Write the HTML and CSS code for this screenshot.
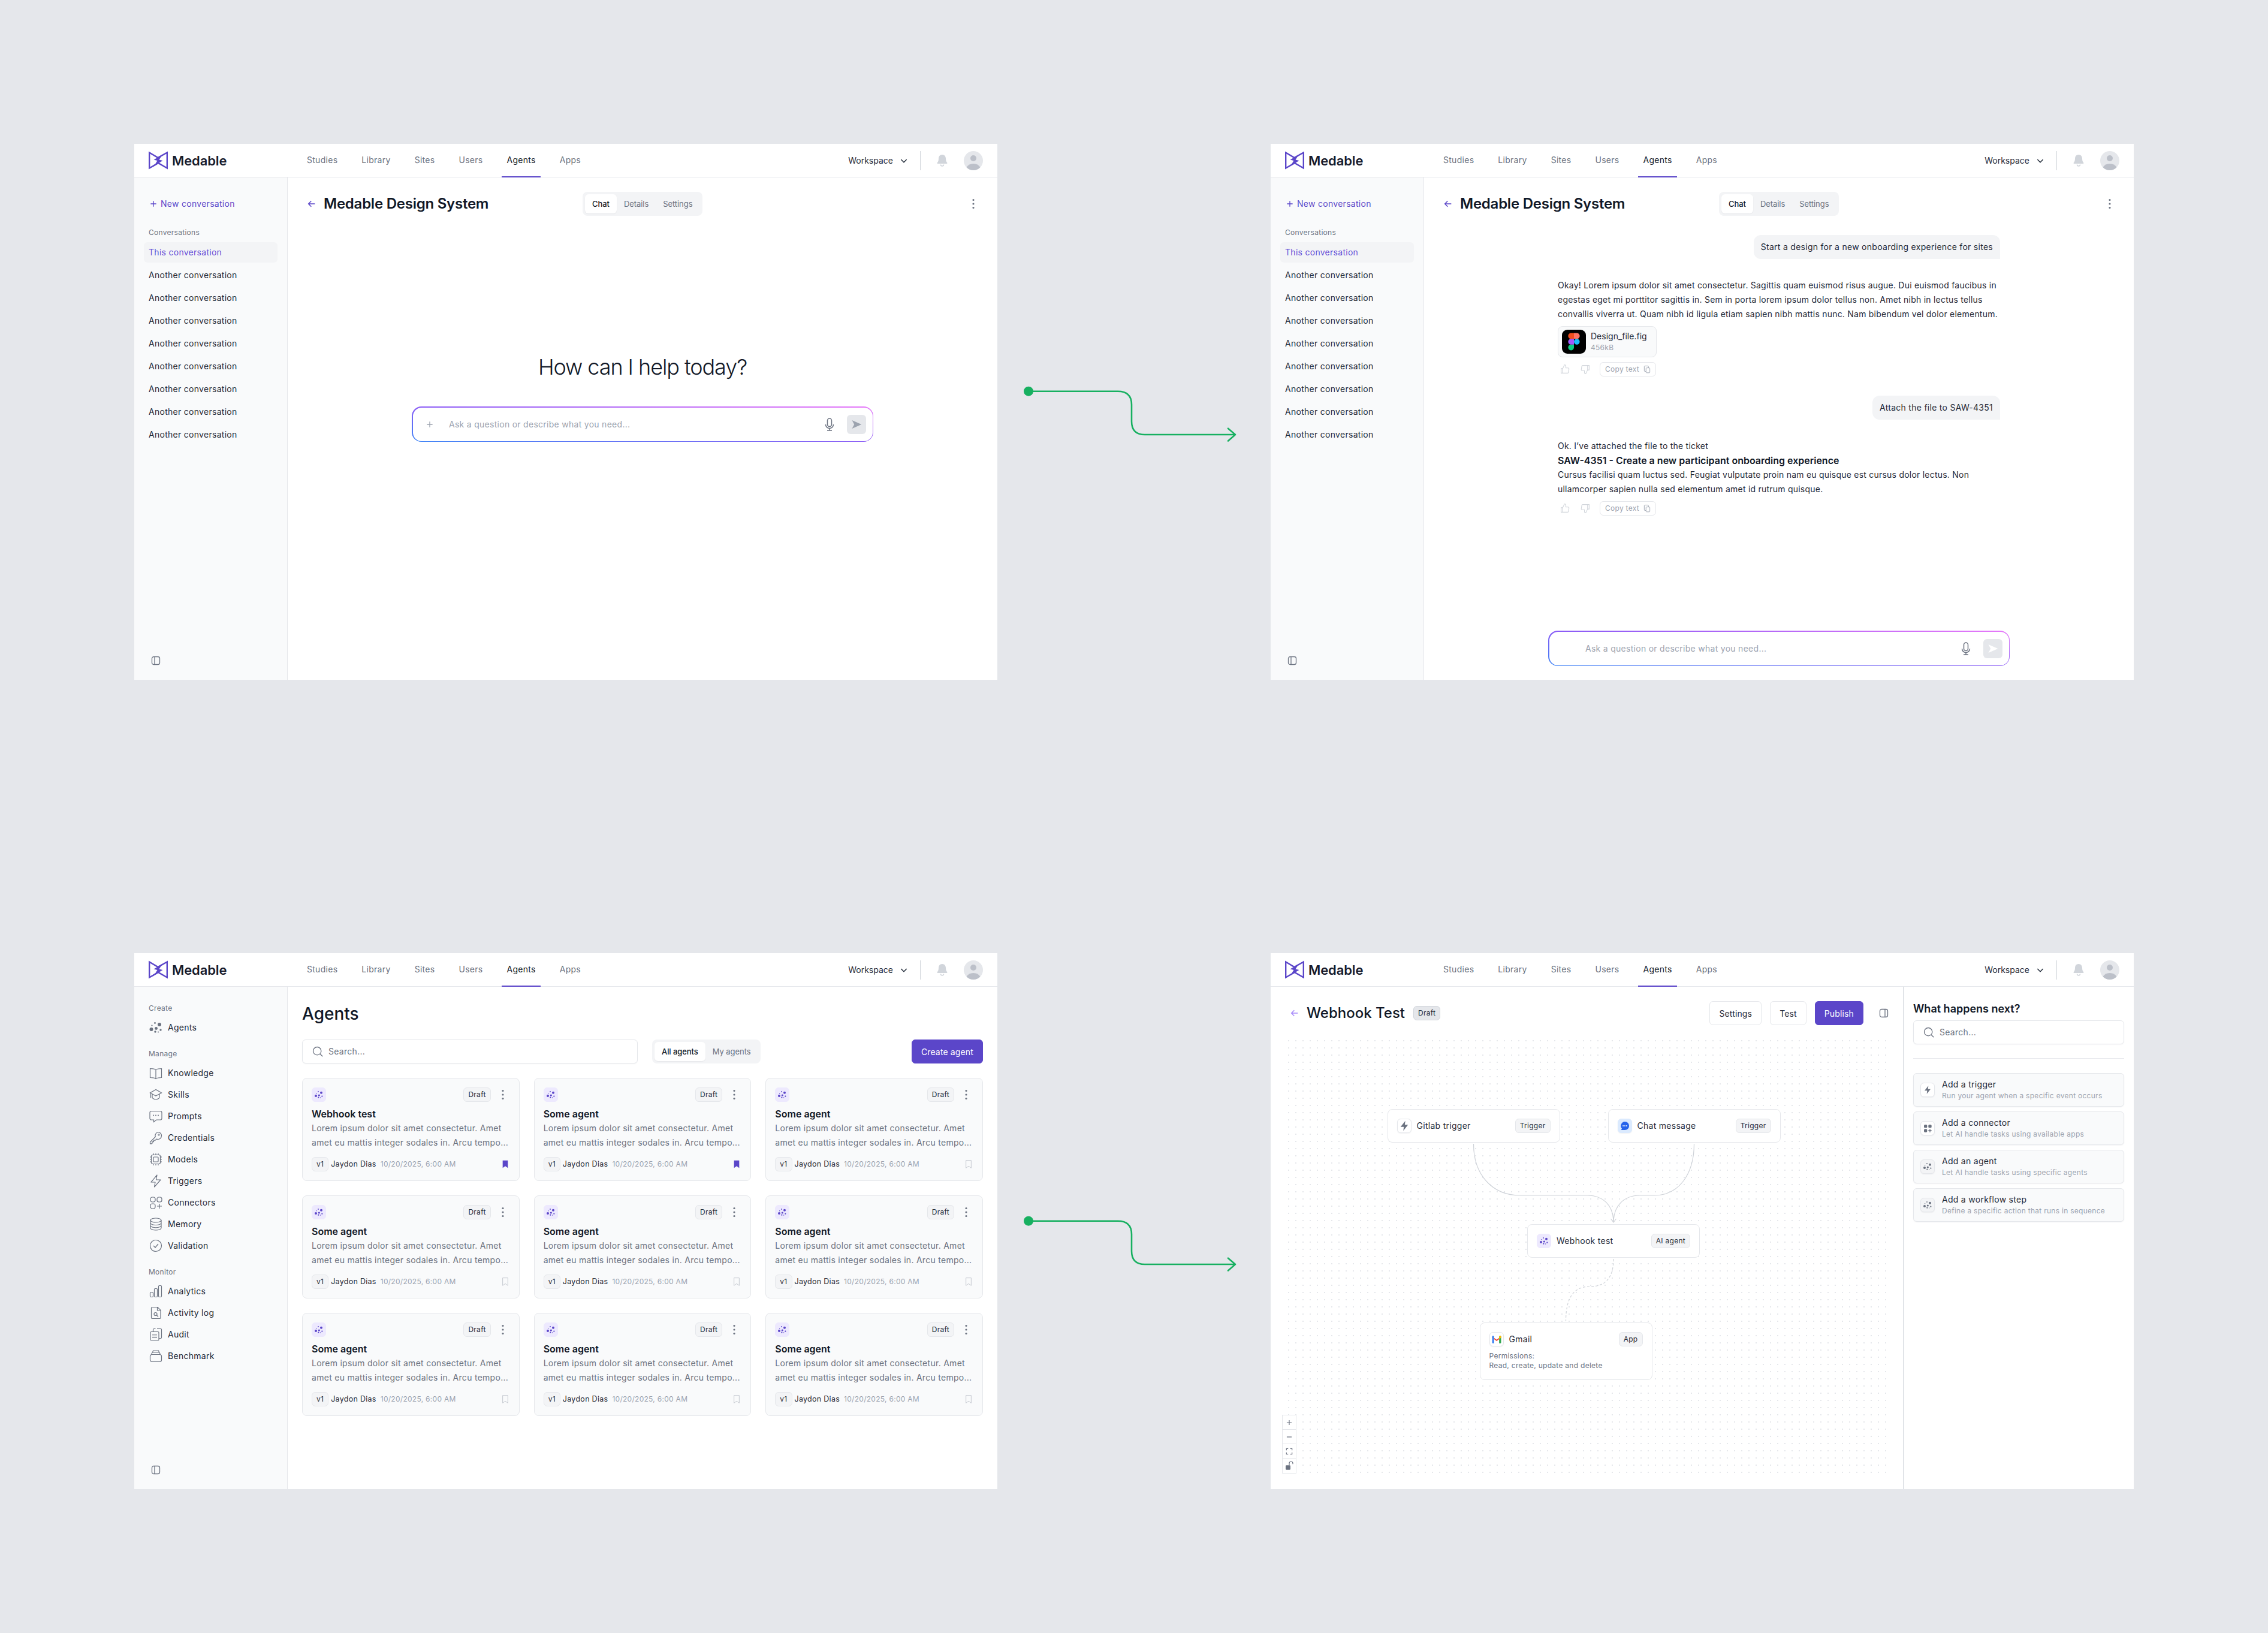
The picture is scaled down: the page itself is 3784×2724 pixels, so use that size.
FILE: index.html
```html
<!DOCTYPE html>
<html lang="en">
<head>
	<meta charset="UTF-8">
	<title>Medable agents</title>
	<link rel="stylesheet" href="styles.css">
</head>
<body>
	<!-- icon sprite -->
	<svg class="sprite" xmlns="http://www.w3.org/2000/svg">
		<symbol id="i-logo" viewBox="0 0 32 31">
			<path d="M1.200 2.500 15.500 11 30.800 2.500V28.500L16 20 1.200 28.500Z" fill="none" stroke="#5b46c9" stroke-width="2.400"/>
			<path d="M23 6 8.500 14.500 14.500 16 9 25 23.500 16 17.500 14.500Z" fill="#5b46c9"/>
		</symbol>
		<symbol id="i-plus" viewBox="0 0 24 24"><path d="M12 5v14M5 12h14" fill="none" stroke="currentColor" stroke-width="2"/></symbol>
		<symbol id="i-back" viewBox="0 0 24 24"><path d="M20 12H4M11 5l-7 7 7 7" fill="none" stroke="currentColor" stroke-width="2.200"/></symbol>
		<symbol id="i-kebab" viewBox="0 0 24 24"><circle cx="12" cy="5.500" r="1.600" fill="currentColor"/><circle cx="12" cy="12" r="1.600" fill="currentColor"/><circle cx="12" cy="18.500" r="1.600" fill="currentColor"/></symbol>
		<symbol id="i-chevron" viewBox="0 0 24 24"><path d="M5 9l7 7 7-7" fill="none" stroke="currentColor" stroke-width="2.200"/></symbol>
		<symbol id="i-bell" viewBox="0 0 24 24">
			<path d="M12 2C8.500 2 6 4.800 6 8.500c0 4-1 5.500-2.300 7-.5.600-.1 1.500.7 1.500h15.200c.8 0 1.200-.9.700-1.500-1.300-1.500-2.300-3-2.300-7C18 4.800 15.500 2 12 2z" fill="currentColor"/>
			<path d="M9.500 18.500a2.500 2.500 0 005 0" fill="none" stroke="currentColor" stroke-width="1.500"/>
		</symbol>
		<symbol id="i-avatar" viewBox="0 0 32 32">
			<circle cx="16" cy="16" r="16" fill="#e5e7eb"/>
			<circle cx="16" cy="12" r="5" fill="#bcc0c9"/>
			<path d="M4.500 27c2.500-4 6.500-6 11.500-6s9 2 11.500 6c-3 3.200-7 5-11.500 5s-8.500-1.800-11.500-5z" fill="#bcc0c9"/>
		</symbol>
		<symbol id="i-mic" viewBox="0 0 24 24"><g fill="none" stroke="currentColor" stroke-width="1.500"><rect x="8.500" y="2" width="7" height="13.500" rx="3.500"/><path d="M5.500 12a6.500 6.500 0 0013 0M12 18.500V22M8 22h8"/></g></symbol>
		<symbol id="i-send" viewBox="0 0 24 24"><path d="M3 3.500 22 12 3 20.500 7.500 12Z" fill="currentColor"/></symbol>
		<symbol id="i-up" viewBox="0 0 24 24"><path d="M7 10.500v10H3.500v-10zM7 10.500l4-8.500c1.700 0 3 1.300 3 3v4h5a2 2 0 012 2.300l-1.200 7.500a2 2 0 01-2 1.700H7" fill="none" stroke="currentColor" stroke-width="1.500"/></symbol>
		<symbol id="i-down" viewBox="0 0 24 24"><path transform="rotate(180 12 12)" d="M7 10.500v10H3.500v-10zM7 10.500l4-8.500c1.700 0 3 1.300 3 3v4h5a2 2 0 012 2.300l-1.200 7.500a2 2 0 01-2 1.700H7" fill="none" stroke="currentColor" stroke-width="1.500"/></symbol>
		<symbol id="i-copy" viewBox="0 0 24 24"><g fill="none" stroke="currentColor" stroke-width="1.600"><rect x="9" y="8" width="11" height="14" rx="2"/><path d="M16 8V4.500a2 2 0 00-2-2H6a2 2 0 00-2 2V16a2 2 0 002 2h3"/></g></symbol>
		<symbol id="i-panel-left" viewBox="0 0 16 16"><g fill="none" stroke="currentColor" stroke-width="1.300"><rect x="1.500" y="1.500" width="13" height="13" rx="3"/><path d="M6 1.500v13"/></g></symbol>
		<symbol id="i-panel-right" viewBox="0 0 16 16"><g fill="none" stroke="currentColor" stroke-width="1.300"><rect x="1.500" y="1.500" width="13" height="13" rx="3"/><path d="M10 1.500v13"/></g></symbol>
		<symbol id="i-search" viewBox="0 0 24 24"><g fill="none" stroke="currentColor" stroke-width="1.600"><circle cx="11" cy="11" r="8"/><path d="M17 17l5 5"/></g></symbol>
		<symbol id="i-dots" viewBox="0 0 24 24">
			<circle cx="4.500" cy="15" r="3" fill="currentColor"/><circle cx="18" cy="7" r="3" fill="currentColor"/><circle cx="12.500" cy="13.500" r="2.400" fill="currentColor"/>
			<circle cx="11" cy="19" r="1.700" fill="currentColor"/><circle cx="20" cy="16" r="1.700" fill="currentColor"/><circle cx="10.500" cy="4.500" r="1.400" fill="currentColor"/>
			<circle cx="5.500" cy="8.500" r="1.100" fill="currentColor"/><circle cx="16" cy="19.500" r="1" fill="currentColor"/>
		</symbol>
		<symbol id="i-mark" viewBox="0 0 24 24"><path d="M5.500 2.500h13v19L12 17l-6.500 4.500z" fill="currentColor"/></symbol>
		<symbol id="i-mark-line" viewBox="0 0 24 24"><path d="M5.500 2.500h13v19L12 17l-6.500 4.500z" fill="none" stroke="currentColor" stroke-width="1.500"/></symbol>
		<symbol id="i-bolt" viewBox="0 0 24 24"><path d="M14 2 4.500 14H11l-1 8 9.500-12H13z" fill="currentColor"/></symbol>
		<symbol id="i-apps" viewBox="0 0 24 24"><rect x="3" y="3" width="8" height="8" rx="2.500" fill="currentColor"/><rect x="14" y="3" width="8" height="8" rx="2.500" fill="currentColor"/><rect x="3" y="14" width="8" height="8" rx="2.500" fill="currentColor"/><path d="M18 14v8M14 18h8" stroke="currentColor" stroke-width="2"/></symbol>

		<symbol id="n-book" viewBox="0 0 24 24"><path d="M12 6.500C10 5 7 4.500 2.500 4.500v15c4.500 0 7.500.5 9.500 2 2-1.500 5-2 9.500-2v-15C17 4.500 14 5 12 6.500zM12 6.500v15" fill="none" stroke="currentColor" stroke-width="1.200"/></symbol>
		<symbol id="n-cap" viewBox="0 0 24 24"><path d="M12 3.500 2.500 9l9.500 5 9.500-5zM6 11v5.500c0 1.600 3 3.500 6 3.500s6-1.900 6-3.500V11M3.500 10v7.500" fill="none" stroke="currentColor" stroke-width="1.200"/></symbol>
		<symbol id="n-chat" viewBox="0 0 24 24"><path d="M4.500 3.500h15a2.500 2.500 0 012.500 2.500v9.500a2.500 2.500 0 01-2.500 2.500H13l-4.500 3.500V18h-4A2.500 2.500 0 012 15.500V6a2.500 2.500 0 012.500-2.500z" fill="none" stroke="currentColor" stroke-width="1.200"/><circle cx="8" cy="10.500" r="1" fill="currentColor"/><circle cx="12" cy="10.500" r="1" fill="currentColor"/><circle cx="16" cy="10.500" r="1" fill="currentColor"/></symbol>
		<symbol id="n-key" viewBox="0 0 24 24"><path d="M15.500 2.500a6 6 0 016 6 6 6 0 01-8.300 5.500L11 16.200H8.500v2.500H6V21l-.8.800H2.500V19l8.800-8.700A6 6 0 0115.500 2.500z" fill="none" stroke="currentColor" stroke-width="1.200"/><circle cx="17" cy="7" r="1.200" fill="none" stroke="currentColor" stroke-width="1"/></symbol>
		<symbol id="n-chip" viewBox="0 0 24 24"><g fill="none" stroke="currentColor" stroke-width="1.200"><rect x="4.500" y="4.500" width="15" height="15" rx="2.500"/><rect x="8" y="8" width="8" height="8" rx="1"/><path d="M8 2v2.500M12 2v2.500M16 2v2.500M8 19.500V22M12 19.500V22M16 19.500V22M2 8h2.500M2 12h2.500M2 16h2.500M19.500 8H22M19.500 12H22M19.500 16H22"/></g></symbol>
		<symbol id="n-bolt" viewBox="0 0 24 24"><path d="M14 2 4 14h7l-1.500 8L20 10h-7.500z" fill="none" stroke="currentColor" stroke-width="1.200" stroke-linejoin="round"/></symbol>
		<symbol id="n-apps" viewBox="0 0 24 24"><g fill="none" stroke="currentColor" stroke-width="1.200"><rect x="3" y="3" width="8" height="8" rx="3"/><rect x="14" y="3" width="8" height="8" rx="3"/><rect x="3" y="14" width="8" height="8" rx="3"/><path d="M18 14v8M14 18h8"/></g></symbol>
		<symbol id="n-data" viewBox="0 0 24 24"><g fill="none" stroke="currentColor" stroke-width="1.200"><ellipse cx="12" cy="5.500" rx="9" ry="3.500"/><path d="M3 5.500v13c0 2 4 3.500 9 3.500s9-1.500 9-3.500v-13M3 10c0 2 4 3.500 9 3.500s9-1.500 9-3.500M3 14.300c0 2 4 3.500 9 3.500s9-1.500 9-3.500"/></g></symbol>
		<symbol id="n-check" viewBox="0 0 24 24"><g fill="none" stroke="currentColor" stroke-width="1.200"><circle cx="12" cy="12" r="9.500"/><path d="M8 12l3 3 5-6"/></g></symbol>
		<symbol id="n-bars" viewBox="0 0 24 24"><g fill="none" stroke="currentColor" stroke-width="1.200"><rect x="2.500" y="13.500" width="5" height="8" rx="1.500"/><rect x="9.500" y="7.500" width="5" height="14" rx="1.500"/><rect x="16.500" y="2.500" width="5" height="19" rx="1.500"/></g></symbol>
		<symbol id="n-doc" viewBox="0 0 24 24"><g fill="none" stroke="currentColor" stroke-width="1.200"><path d="M6 2.500h9l5 5V20a1.500 1.500 0 01-1.500 1.500h-12.500A1.500 1.500 0 014.500 20V4A1.500 1.500 0 016 2.500zM14.500 2.500v5.500H20"/><circle cx="11.500" cy="14" r="2.500"/><path d="M13.500 16l2.500 2.500"/></g></symbol>
		<symbol id="n-clip" viewBox="0 0 24 24"><g fill="none" stroke="currentColor" stroke-width="1.200"><rect x="3" y="7.500" width="14" height="14.500" rx="1.500"/><path d="M7.500 7.500V4A1.500 1.500 0 019 2.500h2.500M14 2.500h6A1.500 1.500 0 0121.500 4v13a1.500 1.500 0 01-1.500 1.500h-3M6 11.500h8M6 14.500h8M6 17.500h8"/></g></symbol>
		<symbol id="n-box" viewBox="0 0 24 24"><g fill="none" stroke="currentColor" stroke-width="1.200"><rect x="2.500" y="9.500" width="19" height="12" rx="3"/><path d="M4.500 9.500 6 6h12l1.500 3.500M6.500 6l1-3h9l1 3"/></g></symbol>

		<symbol id="i-figma" viewBox="0 0 40 40">
			<rect width="40" height="40" rx="9" fill="#000"/>
			<g transform="translate(10.400 5.600) scale(.8)">
				<path d="M6 36c3.300 0 6-2.700 6-6v-6H6c-3.300 0-6 2.700-6 6s2.700 6 6 6z" fill="#0acf83"/>
				<path d="M0 18c0-3.300 2.700-6 6-6h6v12H6c-3.300 0-6-2.700-6-6z" fill="#a259ff"/>
				<path d="M0 6c0-3.300 2.700-6 6-6h6v12H6C2.700 12 0 9.300 0 6z" fill="#f24e1e"/>
				<path d="M12 0h6c3.300 0 6 2.700 6 6s-2.700 6-6 6h-6z" fill="#ff7262"/>
				<path d="M24 18c0 3.300-2.700 6-6 6s-6-2.700-6-6 2.700-6 6-6 6 2.700 6 6z" fill="#1abcfe"/>
			</g>
		</symbol>
		<symbol id="i-gmail" viewBox="0 0 24 24">
			<path d="M3 6.500 12 13l9-6.500V9l-9 6.500L3 9z" fill="#ea4335"/>
			<path d="M3 6.500C3 5 5 4.500 6 5.500l1 .9V20H4.500A1.500 1.500 0 013 18.500z" fill="#4285f4"/>
			<path d="M21 6.500c0-1.500-2-2-3-1l-1 .9V20h2.500a1.500 1.500 0 001.500-1.500z" fill="#34a853"/>
			<path d="M17 6.400 18 5.500c1-1 3-.5 3 1V9l-4 2.900z" fill="#fbbc04"/>
		</symbol>
		<symbol id="i-bubble" viewBox="0 0 24 24">
			<path d="M12 3.500a8.500 8.500 0 018.500 8.500 8.500 8.500 0 01-8.500 8.500H4.500L6 17.500A8.500 8.500 0 0112 3.500z" fill="#2563eb"/>
			<circle cx="8.500" cy="12" r="1.100" fill="#fff"/><circle cx="12" cy="12" r="1.100" fill="#fff"/><circle cx="15.500" cy="12" r="1.100" fill="#fff"/>
		</symbol>
		<symbol id="i-fit" viewBox="0 0 24 24"><path d="M4 9V4h5M15 4h5v5M20 15v5h-5M9 20H4v-5" fill="none" stroke="currentColor" stroke-width="2"/></symbol>
		<symbol id="i-lock" viewBox="0 0 24 24"><rect x="3" y="11" width="12" height="11" rx="2" fill="currentColor"/><path d="M12 11V6a4.500 4.500 0 019 0v2" fill="none" stroke="currentColor" stroke-width="1.800"/></symbol>
		<symbol id="i-minus" viewBox="0 0 24 24"><path d="M5 12h14" fill="none" stroke="currentColor" stroke-width="2.200"/></symbol>
	</svg>

	<div class="board">

		<!-- window 1: empty chat -->
		<section class="window">
			<header class="topbar">
				<div class="brand"><svg class="logo"><use href="#i-logo"/></svg><span class="brand-name">Medable</span></div>
				<nav class="tabs">
					<a class="tab">Studies</a><a class="tab">Library</a><a class="tab">Sites</a><a class="tab">Users</a><a class="tab active">Agents</a><a class="tab">Apps</a>
				</nav>
				<div class="top-right">
					<span class="workspace">Workspace</span><svg class="chev"><use href="#i-chevron"/></svg>
					<span class="vline"></span>
					<svg class="bell"><use href="#i-bell"/></svg>
					<svg class="avatar"><use href="#i-avatar"/></svg>
				</div>
			</header>
			<div class="body">
				<aside class="side">
					<a class="new-chat"><svg class="ic16"><use href="#i-plus"/></svg>New conversation</a>
					<div class="side-label conv-label">Conversations</div>
					<ul class="conv-list">
						<li class="conv current">This conversation</li>
						<li class="conv">Another conversation</li>
						<li class="conv">Another conversation</li>
						<li class="conv">Another conversation</li>
						<li class="conv">Another conversation</li>
						<li class="conv">Another conversation</li>
						<li class="conv">Another conversation</li>
						<li class="conv">Another conversation</li>
						<li class="conv">Another conversation</li>
					</ul>
					<svg class="collapse"><use href="#i-panel-left"/></svg>
				</aside>
				<main class="main">
					<div class="chat-head">
						<div class="chat-title"><svg class="ic16 back"><use href="#i-back"/></svg><h1 class="h-title">Medable Design System</h1></div>
						<div class="seg"><span class="seg-item on">Chat</span><span class="seg-item">Details</span><span class="seg-item">Settings</span></div>
						<svg class="ic24 kebab head-kebab"><use href="#i-kebab"/></svg>
					</div>
					<h2 class="hero">How can I help today?</h2>
					<div class="ask">
						<div class="ask-inner">
							<svg class="ask-plus"><use href="#i-plus"/></svg>
							<span class="ask-text">Ask a question or describe what you need...</span>
							<svg class="ask-mic"><use href="#i-mic"/></svg>
							<span class="ask-send"><svg class="ic20"><use href="#i-send"/></svg></span>
						</div>
					</div>
				</main>
			</div>
		</section>

		<svg class="arrow arrow-top" viewBox="0 0 356 94">
			<circle cx="8" cy="8.700" r="8" fill="#17b060"/>
			<path d="M8 8.700H157Q180 8.700 180 31V59Q180 81 202 81H353M341 70.700 353 81 341 91.500" fill="none" stroke="#17b060" stroke-width="2.600" stroke-linecap="round" stroke-linejoin="round"/>
		</svg>

		<!-- window 2: conversation -->
		<section class="window">
			<header class="topbar">
				<div class="brand"><svg class="logo"><use href="#i-logo"/></svg><span class="brand-name">Medable</span></div>
				<nav class="tabs">
					<a class="tab">Studies</a><a class="tab">Library</a><a class="tab">Sites</a><a class="tab">Users</a><a class="tab active">Agents</a><a class="tab">Apps</a>
				</nav>
				<div class="top-right">
					<span class="workspace">Workspace</span><svg class="chev"><use href="#i-chevron"/></svg>
					<span class="vline"></span>
					<svg class="bell"><use href="#i-bell"/></svg>
					<svg class="avatar"><use href="#i-avatar"/></svg>
				</div>
			</header>
			<div class="body">
				<aside class="side">
					<a class="new-chat"><svg class="ic16"><use href="#i-plus"/></svg>New conversation</a>
					<div class="side-label conv-label">Conversations</div>
					<ul class="conv-list">
						<li class="conv current">This conversation</li>
						<li class="conv">Another conversation</li>
						<li class="conv">Another conversation</li>
						<li class="conv">Another conversation</li>
						<li class="conv">Another conversation</li>
						<li class="conv">Another conversation</li>
						<li class="conv">Another conversation</li>
						<li class="conv">Another conversation</li>
						<li class="conv">Another conversation</li>
					</ul>
					<svg class="collapse"><use href="#i-panel-left"/></svg>
				</aside>
				<main class="main">
					<div class="chat-head">
						<div class="chat-title"><svg class="ic16 back"><use href="#i-back"/></svg><h1 class="h-title">Medable Design System</h1></div>
						<div class="seg"><span class="seg-item on">Chat</span><span class="seg-item">Details</span><span class="seg-item">Settings</span></div>
						<svg class="ic24 kebab head-kebab"><use href="#i-kebab"/></svg>
					</div>
					<div class="thread">
						<div class="bubble">Start a design for a new onboarding experience for sites</div>
						<div class="reply">
							<p class="reply-text">Okay! Lorem ipsum dolor sit amet consectetur. Sagittis quam euismod risus augue. Dui euismod faucibus in<br>egestas eget mi porttitor sagittis in. Sem in porta lorem ipsum dolor tellus non. Amet nibh in lectus tellus<br>convallis viverra ut. Quam nibh id ligula etiam sapien nibh mattis nunc. Nam bibendum vel dolor elementum.</p>
							<div class="file">
								<svg class="file-icon"><use href="#i-figma"/></svg>
								<div><div class="file-name">Design_file.fig</div><div class="file-size">456kB</div></div>
							</div>
							<div class="acts">
								<svg class="thumb"><use href="#i-up"/></svg><svg class="thumb"><use href="#i-down"/></svg>
								<span class="copy">Copy text<svg class="ic14"><use href="#i-copy"/></svg></span>
							</div>
						</div>
						<div class="bubble">Attach the file to SAW-4351</div>
						<div class="reply">
							<p class="reply-text">Ok. I’ve attached the file to the ticket</p>
							<p class="reply-head">SAW-4351 - Create a new participant onboarding experience</p>
							<p class="reply-text">Cursus facilisi quam luctus sed. Feugiat vulputate proin nam eu quisque est cursus dolor lectus. Non<br>ullamcorper sapien nulla sed elementum amet id rutrum quisque.</p>
							<div class="acts">
								<svg class="thumb"><use href="#i-up"/></svg><svg class="thumb"><use href="#i-down"/></svg>
								<span class="copy">Copy text<svg class="ic14"><use href="#i-copy"/></svg></span>
							</div>
						</div>
					</div>
					<div class="ask ask-bottom">
						<div class="ask-inner">
							<span class="ask-text">Ask a question or describe what you need...</span>
							<svg class="ask-mic"><use href="#i-mic"/></svg>
							<span class="ask-send ready"><svg class="ic20"><use href="#i-send"/></svg></span>
						</div>
					</div>
				</main>
			</div>
		</section>

		<!-- window 3: agents list -->
		<section class="window">
			<header class="topbar">
				<div class="brand"><svg class="logo"><use href="#i-logo"/></svg><span class="brand-name">Medable</span></div>
				<nav class="tabs">
					<a class="tab">Studies</a><a class="tab">Library</a><a class="tab">Sites</a><a class="tab">Users</a><a class="tab active">Agents</a><a class="tab">Apps</a>
				</nav>
				<div class="top-right">
					<span class="workspace">Workspace</span><svg class="chev"><use href="#i-chevron"/></svg>
					<span class="vline"></span>
					<svg class="bell"><use href="#i-bell"/></svg>
					<svg class="avatar"><use href="#i-avatar"/></svg>
				</div>
			</header>
			<div class="body">
				<aside class="side side-nav">
					<div class="side-label">Create</div>
					<ul class="nav-group">
						<li class="nav-row"><svg class="ic24"><use href="#i-dots"/></svg>Agents</li>
					</ul>
					<div class="side-label">Manage</div>
					<ul class="nav-group">
						<li class="nav-row"><svg class="ic24"><use href="#n-book"/></svg>Knowledge</li>
						<li class="nav-row"><svg class="ic24"><use href="#n-cap"/></svg>Skills</li>
						<li class="nav-row"><svg class="ic24"><use href="#n-chat"/></svg>Prompts</li>
						<li class="nav-row"><svg class="ic24"><use href="#n-key"/></svg>Credentials</li>
						<li class="nav-row"><svg class="ic24"><use href="#n-chip"/></svg>Models</li>
						<li class="nav-row"><svg class="ic24"><use href="#n-bolt"/></svg>Triggers</li>
						<li class="nav-row"><svg class="ic24"><use href="#n-apps"/></svg>Connectors</li>
						<li class="nav-row"><svg class="ic24"><use href="#n-data"/></svg>Memory</li>
						<li class="nav-row"><svg class="ic24"><use href="#n-check"/></svg>Validation</li>
					</ul>
					<div class="side-label">Monitor</div>
					<ul class="nav-group">
						<li class="nav-row"><svg class="ic24"><use href="#n-bars"/></svg>Analytics</li>
						<li class="nav-row"><svg class="ic24"><use href="#n-doc"/></svg>Activity log</li>
						<li class="nav-row"><svg class="ic24"><use href="#n-clip"/></svg>Audit</li>
						<li class="nav-row"><svg class="ic24"><use href="#n-box"/></svg>Benchmark</li>
					</ul>
					<svg class="collapse"><use href="#i-panel-left"/></svg>
				</aside>
				<main class="main agents">
					<h1 class="agents-title">Agents</h1>
					<div class="toolbar">
						<div class="search list-search"><svg class="ic20"><use href="#i-search"/></svg>Search...</div>
						<div class="seg"><span class="seg-item on">All agents</span><span class="seg-item">My agents</span></div>
						<button class="btn primary create">Create agent</button>
					</div>
					<div class="cards">
						<article class="card">
							<div class="card-top"><span class="tile agent"><svg class="ic16"><use href="#i-dots"/></svg></span><span class="badge push">Draft</span><svg class="ic24 kebab"><use href="#i-kebab"/></svg></div>
							<h3 class="card-name">Webhook test</h3>
							<p class="card-desc">Lorem ipsum dolor sit amet consectetur. Amet<br>amet eu mattis integer sodales in. Arcu tempo...</p>
							<div class="card-foot"><span class="badge">v1</span><span class="who">Jaydon Dias</span><span class="when">10/20/2025, 6:00 AM</span><svg class="ic16 mark on"><use href="#i-mark"/></svg></div>
						</article>
						<article class="card">
							<div class="card-top"><span class="tile agent"><svg class="ic16"><use href="#i-dots"/></svg></span><span class="badge push">Draft</span><svg class="ic24 kebab"><use href="#i-kebab"/></svg></div>
							<h3 class="card-name">Some agent</h3>
							<p class="card-desc">Lorem ipsum dolor sit amet consectetur. Amet<br>amet eu mattis integer sodales in. Arcu tempo...</p>
							<div class="card-foot"><span class="badge">v1</span><span class="who">Jaydon Dias</span><span class="when">10/20/2025, 6:00 AM</span><svg class="ic16 mark on"><use href="#i-mark"/></svg></div>
						</article>
						<article class="card">
							<div class="card-top"><span class="tile agent"><svg class="ic16"><use href="#i-dots"/></svg></span><span class="badge push">Draft</span><svg class="ic24 kebab"><use href="#i-kebab"/></svg></div>
							<h3 class="card-name">Some agent</h3>
							<p class="card-desc">Lorem ipsum dolor sit amet consectetur. Amet<br>amet eu mattis integer sodales in. Arcu tempo...</p>
							<div class="card-foot"><span class="badge">v1</span><span class="who">Jaydon Dias</span><span class="when">10/20/2025, 6:00 AM</span><svg class="ic16 mark"><use href="#i-mark-line"/></svg></div>
						</article>
						<article class="card">
							<div class="card-top"><span class="tile agent"><svg class="ic16"><use href="#i-dots"/></svg></span><span class="badge push">Draft</span><svg class="ic24 kebab"><use href="#i-kebab"/></svg></div>
							<h3 class="card-name">Some agent</h3>
							<p class="card-desc">Lorem ipsum dolor sit amet consectetur. Amet<br>amet eu mattis integer sodales in. Arcu tempo...</p>
							<div class="card-foot"><span class="badge">v1</span><span class="who">Jaydon Dias</span><span class="when">10/20/2025, 6:00 AM</span><svg class="ic16 mark"><use href="#i-mark-line"/></svg></div>
						</article>
						<article class="card">
							<div class="card-top"><span class="tile agent"><svg class="ic16"><use href="#i-dots"/></svg></span><span class="badge push">Draft</span><svg class="ic24 kebab"><use href="#i-kebab"/></svg></div>
							<h3 class="card-name">Some agent</h3>
							<p class="card-desc">Lorem ipsum dolor sit amet consectetur. Amet<br>amet eu mattis integer sodales in. Arcu tempo...</p>
							<div class="card-foot"><span class="badge">v1</span><span class="who">Jaydon Dias</span><span class="when">10/20/2025, 6:00 AM</span><svg class="ic16 mark"><use href="#i-mark-line"/></svg></div>
						</article>
						<article class="card">
							<div class="card-top"><span class="tile agent"><svg class="ic16"><use href="#i-dots"/></svg></span><span class="badge push">Draft</span><svg class="ic24 kebab"><use href="#i-kebab"/></svg></div>
							<h3 class="card-name">Some agent</h3>
							<p class="card-desc">Lorem ipsum dolor sit amet consectetur. Amet<br>amet eu mattis integer sodales in. Arcu tempo...</p>
							<div class="card-foot"><span class="badge">v1</span><span class="who">Jaydon Dias</span><span class="when">10/20/2025, 6:00 AM</span><svg class="ic16 mark"><use href="#i-mark-line"/></svg></div>
						</article>
						<article class="card">
							<div class="card-top"><span class="tile agent"><svg class="ic16"><use href="#i-dots"/></svg></span><span class="badge push">Draft</span><svg class="ic24 kebab"><use href="#i-kebab"/></svg></div>
							<h3 class="card-name">Some agent</h3>
							<p class="card-desc">Lorem ipsum dolor sit amet consectetur. Amet<br>amet eu mattis integer sodales in. Arcu tempo...</p>
							<div class="card-foot"><span class="badge">v1</span><span class="who">Jaydon Dias</span><span class="when">10/20/2025, 6:00 AM</span><svg class="ic16 mark"><use href="#i-mark-line"/></svg></div>
						</article>
						<article class="card">
							<div class="card-top"><span class="tile agent"><svg class="ic16"><use href="#i-dots"/></svg></span><span class="badge push">Draft</span><svg class="ic24 kebab"><use href="#i-kebab"/></svg></div>
							<h3 class="card-name">Some agent</h3>
							<p class="card-desc">Lorem ipsum dolor sit amet consectetur. Amet<br>amet eu mattis integer sodales in. Arcu tempo...</p>
							<div class="card-foot"><span class="badge">v1</span><span class="who">Jaydon Dias</span><span class="when">10/20/2025, 6:00 AM</span><svg class="ic16 mark"><use href="#i-mark-line"/></svg></div>
						</article>
						<article class="card">
							<div class="card-top"><span class="tile agent"><svg class="ic16"><use href="#i-dots"/></svg></span><span class="badge push">Draft</span><svg class="ic24 kebab"><use href="#i-kebab"/></svg></div>
							<h3 class="card-name">Some agent</h3>
							<p class="card-desc">Lorem ipsum dolor sit amet consectetur. Amet<br>amet eu mattis integer sodales in. Arcu tempo...</p>
							<div class="card-foot"><span class="badge">v1</span><span class="who">Jaydon Dias</span><span class="when">10/20/2025, 6:00 AM</span><svg class="ic16 mark"><use href="#i-mark-line"/></svg></div>
						</article>
					</div>
				</main>
			</div>
		</section>

		<svg class="arrow arrow-bottom" viewBox="0 0 356 94">
			<circle cx="8" cy="8.700" r="8" fill="#17b060"/>
			<path d="M8 8.700H157Q180 8.700 180 31V59Q180 81 202 81H353M341 70.700 353 81 341 91.500" fill="none" stroke="#17b060" stroke-width="2.600" stroke-linecap="round" stroke-linejoin="round"/>
		</svg>

		<!-- window 4: workflow builder -->
		<section class="window">
			<header class="topbar">
				<div class="brand"><svg class="logo"><use href="#i-logo"/></svg><span class="brand-name">Medable</span></div>
				<nav class="tabs">
					<a class="tab">Studies</a><a class="tab">Library</a><a class="tab">Sites</a><a class="tab">Users</a><a class="tab active">Agents</a><a class="tab">Apps</a>
				</nav>
				<div class="top-right">
					<span class="workspace">Workspace</span><svg class="chev"><use href="#i-chevron"/></svg>
					<span class="vline"></span>
					<svg class="bell"><use href="#i-bell"/></svg>
					<svg class="avatar"><use href="#i-avatar"/></svg>
				</div>
			</header>
			<div class="body">
				<main class="main builder">
					<div class="build-head">
						<svg class="ic16 back pale"><use href="#i-back"/></svg>
						<h1 class="h-title build-title">Webhook Test</h1>
						<span class="badge dark">Draft</span>
						<button class="btn push">Settings</button>
						<button class="btn">Test</button>
						<button class="btn primary">Publish</button>
						<svg class="ic16 panel-toggle"><use href="#i-panel-right"/></svg>
					</div>
					<div class="canvas">
						<svg class="edges" viewBox="0 0 1008 730">
							<path d="M314.500 178C314.500 230 346 264 392 264H505C530 264 548 280 548 309" class="edge"/>
							<path d="M682.500 178C682.500 230 656 264 616 264H592C565 264 548 282 548 309" class="edge"/>
							<path d="M543.500 303 548 309 552.500 303" class="edge"/>
							<path d="M548 370C548 400 536 416 509 416C481 416 468.500 435 468.500 474" class="edge dashed"/>
						</svg>
						<div class="node node-gitlab">
							<div class="node-row"><span class="tile"><svg class="ic20 grey"><use href="#i-bolt"/></svg></span><span class="node-name">Gitlab trigger</span><span class="badge push">Trigger</span></div>
						</div>
						<div class="node node-chat">
							<div class="node-row"><span class="tile blue"><svg class="ic20"><use href="#i-bubble"/></svg></span><span class="node-name">Chat message</span><span class="badge push">Trigger</span></div>
						</div>
						<div class="node node-agent">
							<div class="node-row"><span class="tile agent"><svg class="ic16"><use href="#i-dots"/></svg></span><span class="node-name">Webhook test</span><span class="badge push">AI agent</span></div>
						</div>
						<div class="node node-gmail">
							<div class="node-row"><span class="tile"><svg class="ic20"><use href="#i-gmail"/></svg></span><span class="node-name">Gmail</span><span class="badge push">App</span></div>
							<p class="node-note">Permissions:<br>Read, create, update and delete</p>
						</div>
						<div class="zoom-box">
							<span class="zoom-btn"><svg class="ic14"><use href="#i-plus"/></svg></span>
							<span class="zoom-btn"><svg class="ic14"><use href="#i-minus"/></svg></span>
							<span class="zoom-btn"><svg class="ic14"><use href="#i-fit"/></svg></span>
							<span class="zoom-btn"><svg class="ic16"><use href="#i-lock"/></svg></span>
						</div>
					</div>
				</main>
				<aside class="next">
					<h2 class="next-title">What happens next?</h2>
					<div class="search"><svg class="ic20"><use href="#i-search"/></svg>Search...</div>
					<hr class="next-rule">
					<div class="options">
						<div class="option"><span class="tile"><svg class="ic16 grey"><use href="#i-bolt"/></svg></span><div><div class="opt-name">Add a trigger</div><div class="opt-sub">Run your agent when a specific event occurs</div></div></div>
						<div class="option"><span class="tile"><svg class="ic16 grey"><use href="#i-apps"/></svg></span><div><div class="opt-name">Add a connector</div><div class="opt-sub">Let AI handle tasks using available apps</div></div></div>
						<div class="option"><span class="tile soft"><svg class="ic16 grey"><use href="#i-dots"/></svg></span><div><div class="opt-name">Add an agent</div><div class="opt-sub">Let AI handle tasks using specific agents</div></div></div>
						<div class="option"><span class="tile soft"><svg class="ic16 grey"><use href="#i-dots"/></svg></span><div><div class="opt-name">Add a workflow step</div><div class="opt-sub">Define a specific action that runs in sequence</div></div></div>
					</div>
				</aside>
			</div>
		</section>

	</div>
</body>
</html>
```

FILE: styles.css
```css
*{
	margin: 0;
	padding: 0;
	box-sizing: border-box;
	list-style: none;
}
body{
	background-color: #e5e7eb;
	font-family: "Inter", "Noto Sans", sans-serif;
	font-size: 14px;
	line-height: 24px;
	letter-spacing: 0.02em;
	color: #111827;
}
svg{
	display: block;
	flex: none;
}
.sprite{
	display: none;
}
.ic14{ width: 14px; height: 14px; }
.ic16{ width: 16px; height: 16px; }
.ic20{ width: 20px; height: 20px; }
.ic24{ width: 24px; height: 24px; }
.grey{ color: #6b7280; }
.push{ margin-left: auto; }

/* page */
.board{
	display: grid;
	grid-template-columns: 1440px 456px 1440px;
	row-gap: 456px;
	padding: 240px 224px;
}
.window{
	height: 894px;
	display: flex;
	flex-direction: column;
	background-color: #fff;
	overflow: hidden;
}
.arrow{
	width: 356px;
	height: 94px;
	margin-left: 44px;
}
.arrow-top{ margin-top: 404px; }
.arrow-bottom{ margin-top: 438px; }

/* top bar */
.topbar{
	height: 56px;
	flex: none;
	display: flex;
	align-items: center;
	padding: 0 24px;
	border-bottom: 1px solid #e5e7eb;
}
.brand{
	width: 256px;
	display: flex;
	align-items: center;
	gap: 7px;
}
.logo{
	width: 32px;
	height: 31px;
}
.brand-name{
	font-size: 22px;
	font-weight: 600;
	letter-spacing: -0.005em;
	color: #171a2b;
}
.tabs{
	display: flex;
	gap: 24px;
	height: 56px;
}
.tab{
	display: flex;
	align-items: center;
	padding: 0 8px 1px;
	color: #6b7280;
}
.tab.active{
	color: #111827;
	border-bottom: 2px solid #5b46c9;
	padding-top: 1px;
}
.top-right{
	margin-left: auto;
	display: flex;
	align-items: center;
}
.workspace{
	letter-spacing: 0;
	color: #1f2937;
}
.chev{
	width: 16px;
	height: 16px;
	margin-left: 10px;
	color: #1f2937;
}
.vline{
	width: 1px;
	height: 32px;
	margin: 0 24px 0 19px;
	background-color: #d1d5db;
}
.bell{
	width: 24px;
	height: 24px;
	color: #d1d5db;
}
.avatar{
	width: 32px;
	height: 32px;
	margin-left: 24px;
}

/* shared app shell */
.body{
	flex: 1;
	display: flex;
	min-height: 0;
}
.side{
	width: 256px;
	flex: none;
	display: flex;
	flex-direction: column;
	padding: 32px 16px 0;
	background-color: #f9fafb;
	border-right: 1px solid #e5e7eb;
}
.main{
	flex: 1;
	min-width: 0;
	display: flex;
	flex-direction: column;
}
.collapse{
	width: 16px;
	height: 16px;
	margin: auto 0 24px 12px;
	color: #6b7280;
}
.new-chat{
	display: flex;
	align-items: center;
	gap: 4px;
	margin-left: 8px;
	color: #5b46c9;
}
.side-label{
	font-size: 12px;
	line-height: 16px;
	color: #6b7280;
}
.conv-label{
	margin: 28px 0 8px 8px;
}
.conv-list{
	display: flex;
	flex-direction: column;
	gap: 4px;
}
.conv{
	height: 34px;
	padding: 0 0 0 8px;
	line-height: 34px;
	border-radius: 6px;
	color: #1f2937;
}
.conv.current{
	background-color: #f3f4f6;
	color: #6550d8;
}

/* chat */
.chat-head{
	display: grid;
	grid-template-columns: 1fr 200px 1fr;
	align-items: center;
	padding: 24px 32px 0;
}
.chat-title{
	display: flex;
	align-items: center;
	gap: 12px;
}
.back{
	color: #5b46c9;
}
.back.pale{
	color: #a78bfa;
}
.h-title{
	font-size: 24px;
	line-height: 32px;
	font-weight: 600;
	letter-spacing: -0.01em;
	color: #111827;
}
.kebab{
	color: #6b7280;
}
.head-kebab{
	justify-self: end;
	margin-right: -4px;
}
.seg{
	display: flex;
	height: 40px;
	padding: 4px;
	border-radius: 8px;
	background-color: #f3f4f6;
}
.seg-item{
	padding: 0 12px;
	font-size: 13px;
	line-height: 32px;
	letter-spacing: -0.005em;
	color: #6b7280;
}
.seg-item.on{
	background-color: #fff;
	border-radius: 6px;
	font-weight: 500;
	color: #111827;
	box-shadow: 0 1px 2px rgba(17, 24, 39, 0.06);
}
.hero{
	margin-top: 230px;
	text-align: center;
	font-size: 36px;
	line-height: 44px;
	font-weight: 300;
	letter-spacing: -0.03em;
	color: #111827;
}
.ask{
	width: 770px;
	height: 59px;
	margin: 44px auto 0;
	padding: 1.5px;
	border-radius: 16px;
	background: linear-gradient(to top right, #3b82f6, #8b5cf6 50%, #e879f9);
}
.ask-bottom{
	margin-top: auto;
	margin-bottom: 23px;
}
.ask-inner{
	height: 100%;
	display: flex;
	align-items: center;
	padding: 0 11px 0 60.5px;
	position: relative;
	background-color: #fff;
	border-radius: 14.5px;
}
.ask-plus{
	position: absolute;
	left: 20px;
	top: 20px;
	width: 16px;
	height: 16px;
	color: #9ca3af;
}
.ask-text{
	color: #9ca3af;
}
.ask-mic{
	width: 24px;
	height: 24px;
	margin-left: auto;
	color: #6b7280;
}
.ask-send{
	width: 32px;
	height: 32px;
	margin-left: 17px;
	display: flex;
	align-items: center;
	justify-content: center;
	border-radius: 6px;
	background-color: #e5e7eb;
	color: #9ca3af;
}
.ask-send.ready{
	color: #fff;
}
.thread{
	width: 738px;
	margin: 32px auto 0;
	display: flex;
	flex-direction: column;
	gap: 32px;
}
.bubble{
	align-self: flex-end;
	padding: 8px 12px;
	border-radius: 12px 12px 0 12px;
	background-color: #f3f4f6;
	color: #1f2937;
	white-space: nowrap;
}
.reply{
	display: flex;
	flex-direction: column;
	align-items: flex-start;
}
.reply-text{
	letter-spacing: 0.016em;
	color: #1f2937;
	white-space: nowrap;
}
.reply-head{
	font-size: 16px;
	font-weight: 600;
	letter-spacing: 0;
	color: #111827;
}
.file{
	width: 165px;
	height: 52px;
	margin-top: 8px;
	display: flex;
	align-items: center;
	gap: 8px;
	padding-left: 6px;
	border: 1px solid #e5e7eb;
	border-radius: 8px;
	background-color: #f9fafb;
}
.file-icon{
	width: 40px;
	height: 40px;
}
.file-name{
	line-height: 20px;
	letter-spacing: 0;
	color: #1f2937;
}
.file-size{
	font-size: 12px;
	line-height: 18px;
	color: #9ca3af;
}
.acts{
	height: 24px;
	margin-top: 8px;
	display: flex;
	align-items: center;
	gap: 16px;
	padding-left: 3px;
}
.thumb{
	width: 18px;
	height: 18px;
	color: #d1d5db;
}
.copy{
	height: 24px;
	display: flex;
	align-items: center;
	gap: 6px;
	margin-left: -1px;
	padding: 0 7px 0 8px;
	border: 1px solid #e5e7eb;
	border-radius: 6px;
	font-size: 12px;
	color: #9ca3af;
}

/* agents list */
.side-nav{
	padding: 28px 24px 0;
}
.nav-group{
	margin: 6px 0 18px;
}
.nav-row{
	height: 36px;
	display: flex;
	align-items: center;
	gap: 8px;
	color: #1f2937;
}
.nav-row svg{
	color: #6b7280;
}
.side-nav .collapse{
	margin-left: 4px;
}
.agents{
	padding: 28px 24px 0;
}
.agents-title{
	font-size: 28px;
	line-height: 34px;
	font-weight: 500;
	letter-spacing: 0;
	color: #111827;
}
.toolbar{
	margin-top: 26px;
	display: flex;
	align-items: center;
	gap: 24px;
}
.search{
	height: 40px;
	display: flex;
	align-items: center;
	gap: 8px;
	padding: 0 15px;
	border: 1px solid #e5e7eb;
	border-radius: 6px;
	background-color: #fff;
	box-shadow: 0 1px 2px rgba(17, 24, 39, 0.04);
	color: #6b7280;
}
.search svg{
	color: #6b7280;
}
.list-search{
	width: 560px;
}
.btn{
	height: 40px;
	padding: 0 15px;
	border: 1px solid #e5e7eb;
	border-radius: 6px;
	background-color: #fff;
	font-family: inherit;
	font-size: 14px;
	letter-spacing: 0.01em;
	color: #1f2937;
}
.btn.primary{
	border-color: #5b46c9;
	background-color: #5b46c9;
	color: #fff;
}
.create{
	margin-left: auto;
}
.cards{
	margin-top: 24px;
	display: grid;
	grid-template-columns: repeat(3, 1fr);
	gap: 24px;
}
.card{
	height: 172px;
	padding: 15px;
	border: 1px solid #e5e7eb;
	border-radius: 8px;
	background-color: #f9fafb;
}
.card-top{
	display: flex;
	align-items: center;
	gap: 8px;
}
.card-name{
	margin-top: 8px;
	font-size: 16px;
	line-height: 24px;
	font-weight: 600;
	letter-spacing: 0;
	color: #111827;
}
.card-desc{
	color: #6b7280;
	white-space: nowrap;
}
.card-foot{
	margin-top: 12px;
	display: flex;
	align-items: center;
}
.who{
	margin-left: 4px;
	font-size: 12.5px;
	color: #1f2937;
}
.when{
	margin-left: 7px;
	font-size: 12px;
	color: #9ca3af;
}
.mark{
	margin-left: auto;
	color: #c4c8cf;
}
.mark.on{
	color: #5b46c9;
}
.badge{
	height: 24px;
	padding: 0 7px;
	display: inline-flex;
	align-items: center;
	border: 1px solid #e5e7eb;
	border-radius: 6px;
	background-color: #f3f4f6;
	font-size: 12px;
	color: #1f2937;
}
.badge.dark{
	border-color: #d1d5db;
	background-color: #e5e7eb;
}
.tile{
	width: 24px;
	height: 24px;
	flex: none;
	display: flex;
	align-items: center;
	justify-content: center;
	border: 1px solid #e5e7eb;
	border-radius: 6px;
	background-color: #fff;
	box-shadow: 0 1px 2px rgba(17, 24, 39, 0.06);
}
.tile.agent{
	background-color: #ede9fe;
	border-color: #ede9fe;
	color: #5b46c9;
	box-shadow: none;
}
.tile.blue{
	background-color: #dbeafe;
	border-color: #dbeafe;
}
.tile.soft{
	background-color: #f3f4f6;
}

/* builder */
.build-head{
	display: flex;
	align-items: center;
	padding: 24px 24px 0 32px;
	gap: 14px;
}
.build-title{
	font-weight: 500;
	letter-spacing: 0;
	margin-left: -2px;
}
.panel-toggle{
	margin-left: 12px;
	color: #6b7280;
}
.canvas{
	position: relative;
	height: 730px;
	margin: 20px 23px 0 24px;
	background-image: radial-gradient(circle, #e5e7eb 0.8px, transparent 1px);
	background-size: 12px 12px;
}
.edges{
	position: absolute;
	left: 0;
	top: 0;
	width: 1008px;
	height: 730px;
}
.edge{
	fill: none;
	stroke: #cfd3d9;
	stroke-width: 1.2;
}
.edge.dashed{
	stroke-dasharray: 4 3;
}
.node{
	position: absolute;
	width: 288px;
	padding: 15px;
	border: 1px solid #e5e7eb;
	border-radius: 8px;
	background-color: #fff;
}
.node-gitlab{ left: 170.5px; top: 120px; }
.node-chat{ left: 538.5px; top: 120px; }
.node-agent{ left: 404px; top: 312px; }
.node-gmail{ left: 324.5px; top: 476px; }
.node-row{
	display: flex;
	align-items: center;
	gap: 9px;
}
.node-name{
	color: #1f2937;
}
.node-note{
	margin-top: 8px;
	font-size: 12px;
	line-height: 16px;
	color: #6b7280;
}
.zoom-box{
	position: absolute;
	left: -5px;
	bottom: 2px;
	width: 24px;
	border: 1px solid #e5e7eb;
	background-color: #fff;
}
.zoom-btn{
	height: 24px;
	display: flex;
	align-items: center;
	justify-content: center;
	border-bottom: 1px solid #e5e7eb;
	color: #6b7280;
}
.zoom-btn:last-child{
	border-bottom: none;
}

/* right panel */
.next{
	width: 385px;
	flex: none;
	padding: 25px 16px 0;
	border-left: 1px solid #d1d5db;
}
.next-title{
	margin-bottom: 7px;
	font-size: 18px;
	line-height: 24px;
	font-weight: 600;
	letter-spacing: 0;
	color: #111827;
}
.next-rule{
	margin: 23px 0 24px;
	border: none;
	border-top: 1px solid #e5e7eb;
}
.options{
	display: flex;
	flex-direction: column;
	gap: 8px;
}
.option{
	height: 56px;
	display: flex;
	align-items: center;
	gap: 12px;
	padding: 0 11px;
	border: 1px solid #e5e7eb;
	border-radius: 6px;
	background-color: #f9fafb;
	box-shadow: 0 1px 2px rgba(17, 24, 39, 0.05);
}
.opt-name{
	line-height: 20px;
	color: #1f2937;
}
.opt-sub{
	font-size: 12px;
	line-height: 18px;
	color: #9ca3af;
}
```
